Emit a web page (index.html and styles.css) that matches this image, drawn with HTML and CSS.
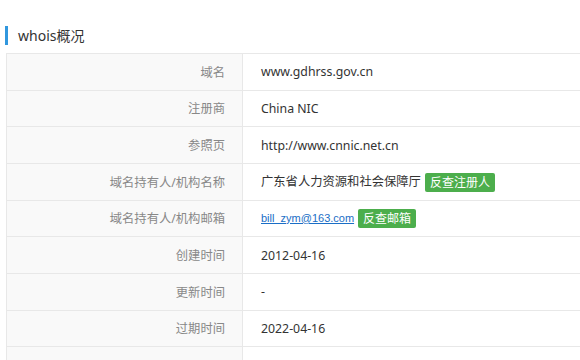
FILE: index.html
```html
<!DOCTYPE html>
<html lang="zh-CN">
<head>
  <meta charset="UTF-8">
  <meta name="viewport" content="width=device-width, initial-scale=1.0">
  <title>whois概况</title>
  <link rel="stylesheet" href="styles.css">
</head>
<body>
  <!-- Whois summary -->
  <div class="panel">
    <h3 class="section-title">whois概况</h3>

    <table class="whois-table">
      <tr>
        <th>域名</th>
        <td>www.gdhrss.gov.cn</td>
      </tr>
      <tr>
        <th>注册商</th>
        <td>China NIC</td>
      </tr>
      <tr>
        <th>参照页</th>
        <td>http://www.cnnic.net.cn</td>
      </tr>
      <tr>
        <th>域名持有人/机构名称</th>
        <td>广东省人力资源和社会保障厅<a href="#" class="btn-lookup">反查注册人</a></td>
      </tr>
      <tr>
        <th>域名持有人/机构邮箱</th>
        <td><a href="#" class="email-link">bill_zym@163.com</a><a href="#" class="btn-lookup">反查邮箱</a></td>
      </tr>
      <tr>
        <th>创建时间</th>
        <td>2012-04-16</td>
      </tr>
      <tr>
        <th>更新时间</th>
        <td>-</td>
      </tr>
      <tr>
        <th>过期时间</th>
        <td>2022-04-16</td>
      </tr>
      <tr>
        <th></th>
        <td></td>
      </tr>
    </table>
  </div>
</body>
</html>
```

FILE: styles.css
```css
body {
  margin: 0;
  font-family: "Noto Sans", "Noto Sans CJK SC", sans-serif;
  color: #333;
  background-color: #fff;
  overflow: hidden;
}

.panel {
  padding: 26px 0 0 5px;
}

/* Title with blue bar */
.section-title {
  margin: 0 0 8px 0;
  padding-left: 10px;
  border-left: 3px solid #3197de;
  font-size: 14px;
  font-weight: normal;
  line-height: 19px;
  color: #333;
}

.whois-table {
  width: 640px;
  margin-left: 1px;
  border-collapse: collapse;
}

.whois-table th,
.whois-table td {
  height: 35.67px;
  padding: 0;
  border: 1px solid #e8e8e8;
  vertical-align: middle;
}

.whois-table th {
  width: 218px;
  padding-right: 17px;
  text-align: right;
  font-size: 12.3px;
  font-weight: normal;
  color: #888;
  background-color: #f9f9f9;
}

.whois-table td {
  padding-left: 18px;
  font-size: 12.3px;
  color: #333;
}

.email-link {
  font-family: "Liberation Sans", Arial, sans-serif;
  font-size: 11px;
  color: #1a6ec6;
  text-decoration: underline;
}

.btn-lookup {
  display: inline-block;
  margin-left: 4px;
  padding: 0 5px;
  height: 19px;
  line-height: 19px;
  font-size: 12px;
  color: #fff;
  background-color: #4cae4c;
  border-radius: 2px;
  text-decoration: none;
  vertical-align: middle;
}
```
